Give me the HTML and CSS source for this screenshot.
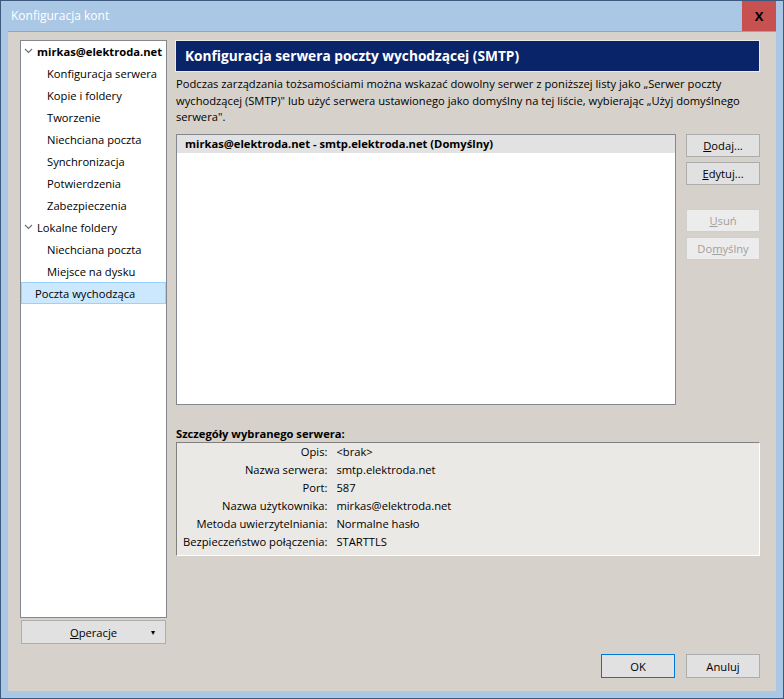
FILE: index.html
```html
<!DOCTYPE html>
<html lang="pl">
<head>
    <meta charset="UTF-8">
    <title>Konfiguracja kont</title>
    <link rel="stylesheet" href="styles.css">
</head>
<body>
<div class="window">
    <div class="titlebar">
        <span class="title">Konfiguracja kont</span>
        <div class="close">X</div>
    </div>

    <div class="client">
        <!-- lewa kolumna: drzewo kont -->
        <div class="left">
            <div class="tree">
                <div class="node parent">
                    <svg class="chev" width="9" height="6" viewBox="0 0 9 6"><polyline points="1,1 4.5,4.5 8,1" fill="none" stroke="#6d6d6d" stroke-width="1.1"/></svg>
                    <b>mirkas@elektroda.net</b>
                </div>
                <div class="node child">Konfiguracja serwera</div>
                <div class="node child">Kopie i foldery</div>
                <div class="node child">Tworzenie</div>
                <div class="node child">Niechciana poczta</div>
                <div class="node child">Synchronizacja</div>
                <div class="node child">Potwierdzenia</div>
                <div class="node child">Zabezpieczenia</div>
                <div class="node parent">
                    <svg class="chev" width="9" height="6" viewBox="0 0 9 6"><polyline points="1,1 4.5,4.5 8,1" fill="none" stroke="#6d6d6d" stroke-width="1.1"/></svg>
                    Lokalne foldery
                </div>
                <div class="node child">Niechciana poczta</div>
                <div class="node child">Miejsce na dysku</div>
                <div class="node top selected">Poczta wychodząca</div>
            </div>
            <button class="btn ops"><span><u>O</u>peracje</span><span class="arrow">▾</span></button>
        </div>

        <!-- prawa kolumna -->
        <div class="right">
            <div class="header">Konfiguracja serwera poczty wychodzącej (SMTP)</div>
            <p class="desc">Podczas zarządzania tożsamościami można wskazać dowolny serwer z poniższej listy jako „Serwer poczty wychodzącej (SMTP)" lub użyć serwera ustawionego jako domyślny na tej liście, wybierając „Użyj domyślnego serwera".</p>

            <div class="servers">
                <div class="listbox">
                    <div class="row">mirkas@elektroda.net - smtp.elektroda.net (Domyślny)</div>
                </div>
                <div class="side">
                    <button class="btn"><u>D</u>odaj...</button>
                    <button class="btn"><u>E</u>dytuj...</button>
                    <button class="btn disabled spaced"><u>U</u>suń</button>
                    <button class="btn disabled">Do<u>m</u>yślny</button>
                </div>
            </div>

            <div class="details-title">Szczegóły wybranego serwera:</div>
            <div class="details">
                <span class="lbl">Opis:</span><span>&lt;brak&gt;</span>
                <span class="lbl">Nazwa serwera:</span><span>smtp.elektroda.net</span>
                <span class="lbl">Port:</span><span>587</span>
                <span class="lbl">Nazwa użytkownika:</span><span>mirkas@elektroda.net</span>
                <span class="lbl">Metoda uwierzytelniania:</span><span>Normalne hasło</span>
                <span class="lbl">Bezpieczeństwo połączenia:</span><span>STARTTLS</span>
            </div>
        </div>

        <div class="footer">
            <button class="btn default">OK</button>
            <button class="btn">Anuluj</button>
        </div>
    </div>
</div>
</body>
</html>
```

FILE: styles.css
```css
body {
    margin: 0;
    background: #1f2d3d;
    font-family: "Open Sans", "Noto Sans", sans-serif;
    font-size: 11.2px;
    color: #000;
}

.window {
    width: 782px;
    height: 697px;
    border: 1px solid #3d5a7e;
    background: #abc7e6;
    display: flex;
    flex-direction: column;
}

.titlebar {
    height: 30px;
    display: flex;
    align-items: center;
    justify-content: space-between;
}

.title {
    color: #fff;
    font-size: 12px;
    padding-left: 10px;
    margin-top: -1px;
}

.close {
    width: 34px;
    height: 30px;
    margin-right: 7px;
    margin-top: -1px;
    background: #c75050;
    color: #000;
    font-weight: bold;
    font-size: 13px;
    display: flex;
    align-items: center;
    justify-content: center;
}

/* obszar roboczy okna */
.client {
    margin: 0 7px 7px 7px;
    flex: 1;
    background: #d6d2cb;
    border-top: 1px solid #8ea6c2;
    padding: 8px 16px 13px 12px;
    display: grid;
    grid-template-columns: 147px 1fr;
    grid-template-rows: 1fr auto;
    column-gap: 9px;
}

.left {
    display: flex;
    flex-direction: column;
}

.tree {
    flex: 1;
    background: #fff;
    border: 1px solid #828790;
}

.node {
    height: 22px;
    display: flex;
    align-items: center;
    white-space: nowrap;
}

.node:first-child {
    margin-top: -1px;
}

.node.parent {
    padding-left: 3px;
}

.chev {
    margin-right: 4px;
}

.node.child {
    padding-left: 26px;
}

.node.top {
    padding-left: 14px;
}

.selected {
    background: #cce8ff;
    border: 1px solid #99d1ff;
    height: 20px;
    padding-left: 13px !important;
}

.btn {
    font-family: inherit;
    font-size: 11.2px;
    color: #000;
    background: #e1e1e1;
    border: 1px solid #adadad;
    height: 23px;
    padding: 0;
    cursor: default;
}

.btn.disabled {
    color: #a0a0a0;
    background: #ececec;
    border-color: #cfcfcf;
}

.btn.default {
    border-color: #0078d7;
}

.ops {
    height: 24px;
    margin: 2px 1px 0 1px;
    position: relative;
}

.ops .arrow {
    position: absolute;
    right: 10px;
    top: 5px;
    font-size: 8px;
}

.right {
    display: flex;
    flex-direction: column;
}

.header {
    background: #0a246a;
    border: 1px solid #ecebe8;
    color: #fff;
    font-weight: bold;
    font-size: 13.7px;
    height: 30px;
    line-height: 30px;
    padding-left: 9px;
    margin-left: -1px;
}

.desc {
    margin: 4px 0 0 0;
    line-height: 16.5px;
}

.servers {
    display: flex;
    gap: 10px;
    margin-top: 8px;
}

.listbox {
    flex: 1;
    height: 269px;
    background: #fff;
    border: 1px solid #828790;
}

.listbox .row {
    background: #e2e2e2;
    height: 18px;
    line-height: 18px;
    font-weight: bold;
    padding-left: 8px;
}

.side {
    width: 74px;
    display: flex;
    flex-direction: column;
    gap: 5px;
}

.side .spaced {
    margin-top: 19px;
}

.details-title {
    font-weight: bold;
    margin-top: 21px;
}

.details {
    margin-top: 1px;
    background: #ebe9e5;
    border: 1px solid;
    border-color: #808080 #fff #fff #808080;
    padding: 0 6px 4px 6px;
    display: grid;
    grid-template-columns: auto 1fr;
    column-gap: 9px;
}

.details span {
    line-height: 18px;
}

.details .lbl {
    text-align: right;
}

.footer {
    grid-column: 1 / 3;
    display: flex;
    justify-content: flex-end;
    gap: 11px;
    margin-top: 10px;
}

.footer .btn {
    width: 74px;
    height: 24px;
}
```
